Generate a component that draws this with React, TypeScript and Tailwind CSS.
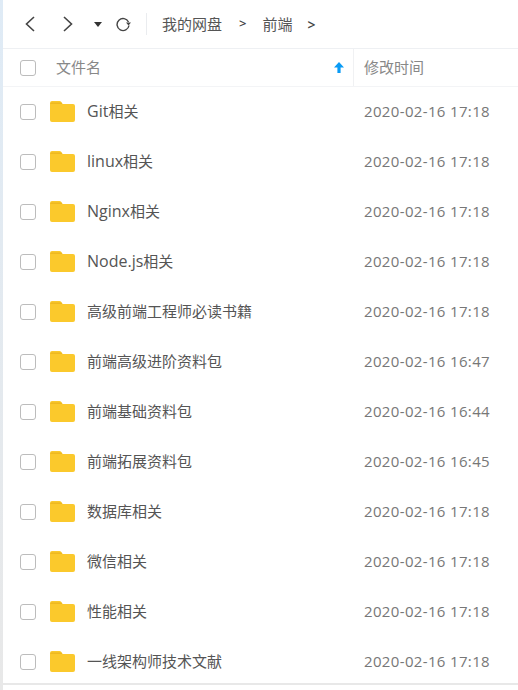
const files = [
  { latin: "Git", name: "相关", time: "2020-02-16 17:18" },
  { latin: "linux", name: "相关", time: "2020-02-16 17:18" },
  { latin: "Nginx", name: "相关", time: "2020-02-16 17:18" },
  { latin: "Node.js", name: "相关", time: "2020-02-16 17:18" },
  { latin: "", name: "高级前端工程师必读书籍", time: "2020-02-16 17:18" },
  { latin: "", name: "前端高级进阶资料包", time: "2020-02-16 16:47" },
  { latin: "", name: "前端基础资料包", time: "2020-02-16 16:44" },
  { latin: "", name: "前端拓展资料包", time: "2020-02-16 16:45" },
  { latin: "", name: "数据库相关", time: "2020-02-16 17:18" },
  { latin: "", name: "微信相关", time: "2020-02-16 17:18" },
  { latin: "", name: "性能相关", time: "2020-02-16 17:18" },
  { latin: "", name: "一线架构师技术文献", time: "2020-02-16 17:18" },
];

function Checkbox() {
  return <div className="w-4 h-4 shrink-0 rounded-[3px] border border-[#bcbcbc] bg-white" />;
}

function Folder() {
  return (
    <svg viewBox="0 0 25 21" className="w-[25px] h-[21px] shrink-0">
      <path
        d="M0 2a2 2 0 0 1 2-2h7.5a2 2 0 0 1 1.6.8L12.5 3H23a2 2 0 0 1 2 2v14a2 2 0 0 1-2 2H2a2 2 0 0 1-2-2z"
        fill="#fbc92c"
      />
      <path d="M0 3h12.5L11.5 1.6H1z" fill="#eeb820" />
    </svg>
  );
}

export default function App() {
  return (
    <div
      className="w-[518px] h-[690px] overflow-hidden bg-white flex text-[#666]"
      style={{ fontFamily: '"Open Sans", "Noto Sans CJK SC", sans-serif' }}
    >
      <div className="w-[3px] shrink-0 bg-gradient-to-b from-[#dfebf6] to-[#e8e8e8]" />
      <div className="flex-1 flex flex-col min-w-0">
        {/* 工具栏 */}
        <div className="h-[49px] shrink-0 flex items-center border-b border-[#eef0f3]">
          <svg viewBox="0 0 14 18" className="w-[14px] h-[18px] ml-[20px] text-[#444]" fill="none" stroke="currentColor" strokeWidth="1.6">
            <path d="M11 2 3.5 9l7.5 7" />
          </svg>
          <svg viewBox="0 0 14 18" className="w-[14px] h-[18px] ml-[24px] text-[#444]" fill="none" stroke="currentColor" strokeWidth="1.6">
            <path d="M3 2l7.5 7L3 16" />
          </svg>
          <svg viewBox="0 0 8 5" className="w-2 h-[5px] ml-[19px] text-[#333]" fill="currentColor">
            <path d="M0 0h8L4 5z" />
          </svg>
          <svg viewBox="0 0 16 16" className="w-4 h-4 ml-[13px] text-[#444]" fill="none" stroke="currentColor" strokeWidth="1.4">
            <path d="M13.5 6A6 6 0 1 0 14 9.5" />
            <path d="M11 6.5h5L13.5 9.5z" fill="currentColor" stroke="none" />
          </svg>
          <div className="w-px h-[22px] ml-[15px] bg-[#eaecef]" />
          <span className="ml-[15px] text-[15px] text-[#555]">我的网盘</span>
          <span className="ml-[17px] text-[13px] font-semibold text-[#444]">&gt;</span>
          <span className="ml-[16px] text-[15px] text-[#555]">前端</span>
          <span className="ml-[15px] text-[14px] font-semibold text-[#444]">&gt;</span>
        </div>

        {/* 表头 */}
        <div className="h-[38px] shrink-0 flex items-center border-b border-[#f3f4f6] text-[15px] text-[#888]">
          <div className="ml-[17px]">
            <Checkbox />
          </div>
          <span className="ml-[20px]">文件名</span>
          <svg viewBox="0 0 10 11" className="w-[10px] h-[11px] ml-auto mr-[9px] text-[#0a9bf5]" fill="currentColor">
            <path d="M5 0l5 5.5H6.6V11H3.4V5.5H0z" />
          </svg>
          <div className="w-px h-full bg-[#f0f1f3]" />
          <span className="ml-[10px] w-[154px]">修改时间</span>
        </div>

        {/* 文件列表 */}
        <div className="flex flex-col">
          {files.map((f) => (
            <div key={f.name + f.latin} className="h-[50px] shrink-0 flex items-center">
              <div className="ml-[17px]">
                <Checkbox />
              </div>
              <div className="ml-[14px] mb-[2px] flex">
                <Folder />
              </div>
              <span className="ml-[12px] pb-[2px] text-[15px] text-[#555]">
                <span className="text-[16px]">{f.latin}</span>
                {f.name}
              </span>
              <span className="ml-auto w-[154px] pb-[2px] text-[15px] tracking-[0.35px] text-[#777]">{f.time}</span>
            </div>
          ))}
        </div>
        <div className="h-0.5 -mt-[4px] shrink-0 bg-[#e8e8e8]" />
      </div>
    </div>
  );
}
